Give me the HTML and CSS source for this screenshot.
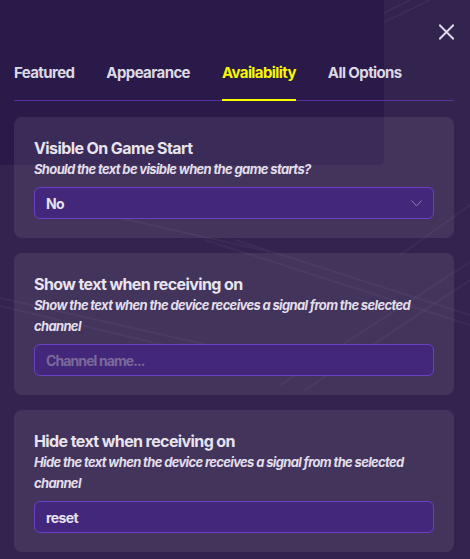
FILE: index.html
```html
<!DOCTYPE html>
<html lang="en">
<head>
<meta charset="utf-8">
<title>Text device options</title>
<link rel="stylesheet" href="styles.css">
</head>
<body>
<div class="page">
  <svg class="bg-deco" width="470" height="559" viewBox="0 0 470 559" aria-hidden="true">
    <path d="M0 0H384V160A5 5 0 0 1 379 165H0Z" fill="#2a1a4a"/>
    <g stroke="#ffffff" stroke-opacity="0.04" stroke-width="2" fill="none">
      <line x1="384" y1="22" x2="430" y2="0"/>
      <line x1="384" y1="13" x2="410" y2="0"/>
      <line x1="205" y1="240" x2="470" y2="325"/>
      <line x1="235" y1="240" x2="470" y2="315"/>
      <line x1="0" y1="298" x2="230" y2="350"/>
      <line x1="0" y1="306" x2="210" y2="356"/>
      <line x1="280" y1="385" x2="470" y2="262"/>
      <line x1="305" y1="390" x2="470" y2="280"/>
      <line x1="120" y1="218" x2="270" y2="252"/>
      <line x1="400" y1="255" x2="470" y2="205"/>
    </g>
  </svg>

  <header class="header">
    <div class="topbar">
      <button class="close-btn" aria-label="Close">
        <svg width="15" height="16" viewBox="0 0 15 16">
          <path d="M1 1.5L14 14.5M14 1.5L1 14.5" stroke="#ddd8e8" stroke-width="2" stroke-linecap="square"/>
        </svg>
      </button>
    </div>
    <nav class="tabs">
      <span class="tab">Featured</span>
      <span class="tab">Appearance</span>
      <span class="tab tab-active">Availability</span>
      <span class="tab">All Options</span>
    </nav>
  </header>

  <main class="cards">
    <section class="card">
      <h3 class="card-title">Visible On Game Start</h3>
      <p class="card-desc">Should the text be visible when the game starts?</p>
      <div class="field select">
        <span class="field-value">No</span>
        <svg class="chevron" width="11" height="7" viewBox="0 0 11 7">
          <path d="M0.5 0.5L5.5 6L10.5 0.5" stroke="#8c7caa" stroke-width="1" fill="none"/>
        </svg>
      </div>
    </section>

    <section class="card">
      <h3 class="card-title">Show text when receiving on</h3>
      <p class="card-desc">Show the text when the device receives a signal from the selected channel</p>
      <div class="field">
        <span class="field-placeholder">Channel name...</span>
      </div>
    </section>

    <section class="card">
      <h3 class="card-title">Hide text when receiving on</h3>
      <p class="card-desc">Hide the text when the device receives a signal from the selected channel</p>
      <div class="field">
        <span class="field-value">reset</span>
      </div>
    </section>
  </main>
</div>
</body>
</html>
```

FILE: styles.css
```css
html, body {
  margin: 0;
  padding: 0;
}

body {
  background: #33234f;
  font-family: Inter, "Noto Sans", "Liberation Sans", sans-serif;
  color: #e6e2ec;
  width: 470px;
  height: 559px;
  overflow: hidden;
}

.page {
  position: relative;
  width: 470px;
  height: 559px;
}

.bg-deco {
  position: absolute;
  left: 0;
  top: 0;
  z-index: 0;
}

.header,
.cards {
  position: relative;
  z-index: 1;
}

.topbar {
  display: flex;
  justify-content: flex-end;
  height: 63px;
  box-sizing: border-box;
  padding: 24px 16px 0 0;
}

.close-btn {
  border: 0;
  background: none;
  padding: 0;
  width: 15px;
  height: 16px;
  display: block;
  cursor: pointer;
}

.close-btn svg {
  display: block;
}

.tabs {
  display: flex;
  gap: 32px;
  margin: 0 16px 0 14px;
  border-bottom: 1px solid #5733a0;
}

.tab {
  font-size: 15px;
  line-height: 20px;
  font-weight: 700;
  color: #ddd9e3;
  letter-spacing: -0.6px;
  padding-bottom: 16px;
  border-bottom: 2px solid transparent;
  margin-bottom: -1px;
}

.tab-active {
  color: #f8f800;
  border-bottom-color: #f8f800;
}

.cards {
  display: flex;
  flex-direction: column;
  gap: 15px;
  margin: 0 16px 0 14px;
  padding-top: 16px;
}

.card {
  background: rgba(255, 255, 255, 0.08);
  border-radius: 8px;
  padding: 20px 20px 19px;
}

.card-title {
  margin: 0;
  font-size: 16px;
  line-height: 22px;
  font-weight: 700;
  color: #e8e4ee;
  letter-spacing: -0.6px;
}

.card-desc {
  margin: 0 0 7px;
  font-size: 13px;
  line-height: 21px;
  font-style: italic;
  font-weight: 700;
  color: #e2deea;
  letter-spacing: -0.65px;
}

.field {
  height: 32px;
  box-sizing: border-box;
  background: #42277a;
  border: 1px solid #6a41c6;
  border-radius: 6px;
  padding: 0 11px;
  display: flex;
  align-items: center;
  justify-content: space-between;
  font-size: 14px;
  font-weight: 700;
  letter-spacing: -0.6px;
}

.field-value {
  color: #e6e2ec;
}

.field-placeholder {
  color: #7b6a99;
  letter-spacing: -0.9px;
}

.chevron {
  display: block;
}
```
